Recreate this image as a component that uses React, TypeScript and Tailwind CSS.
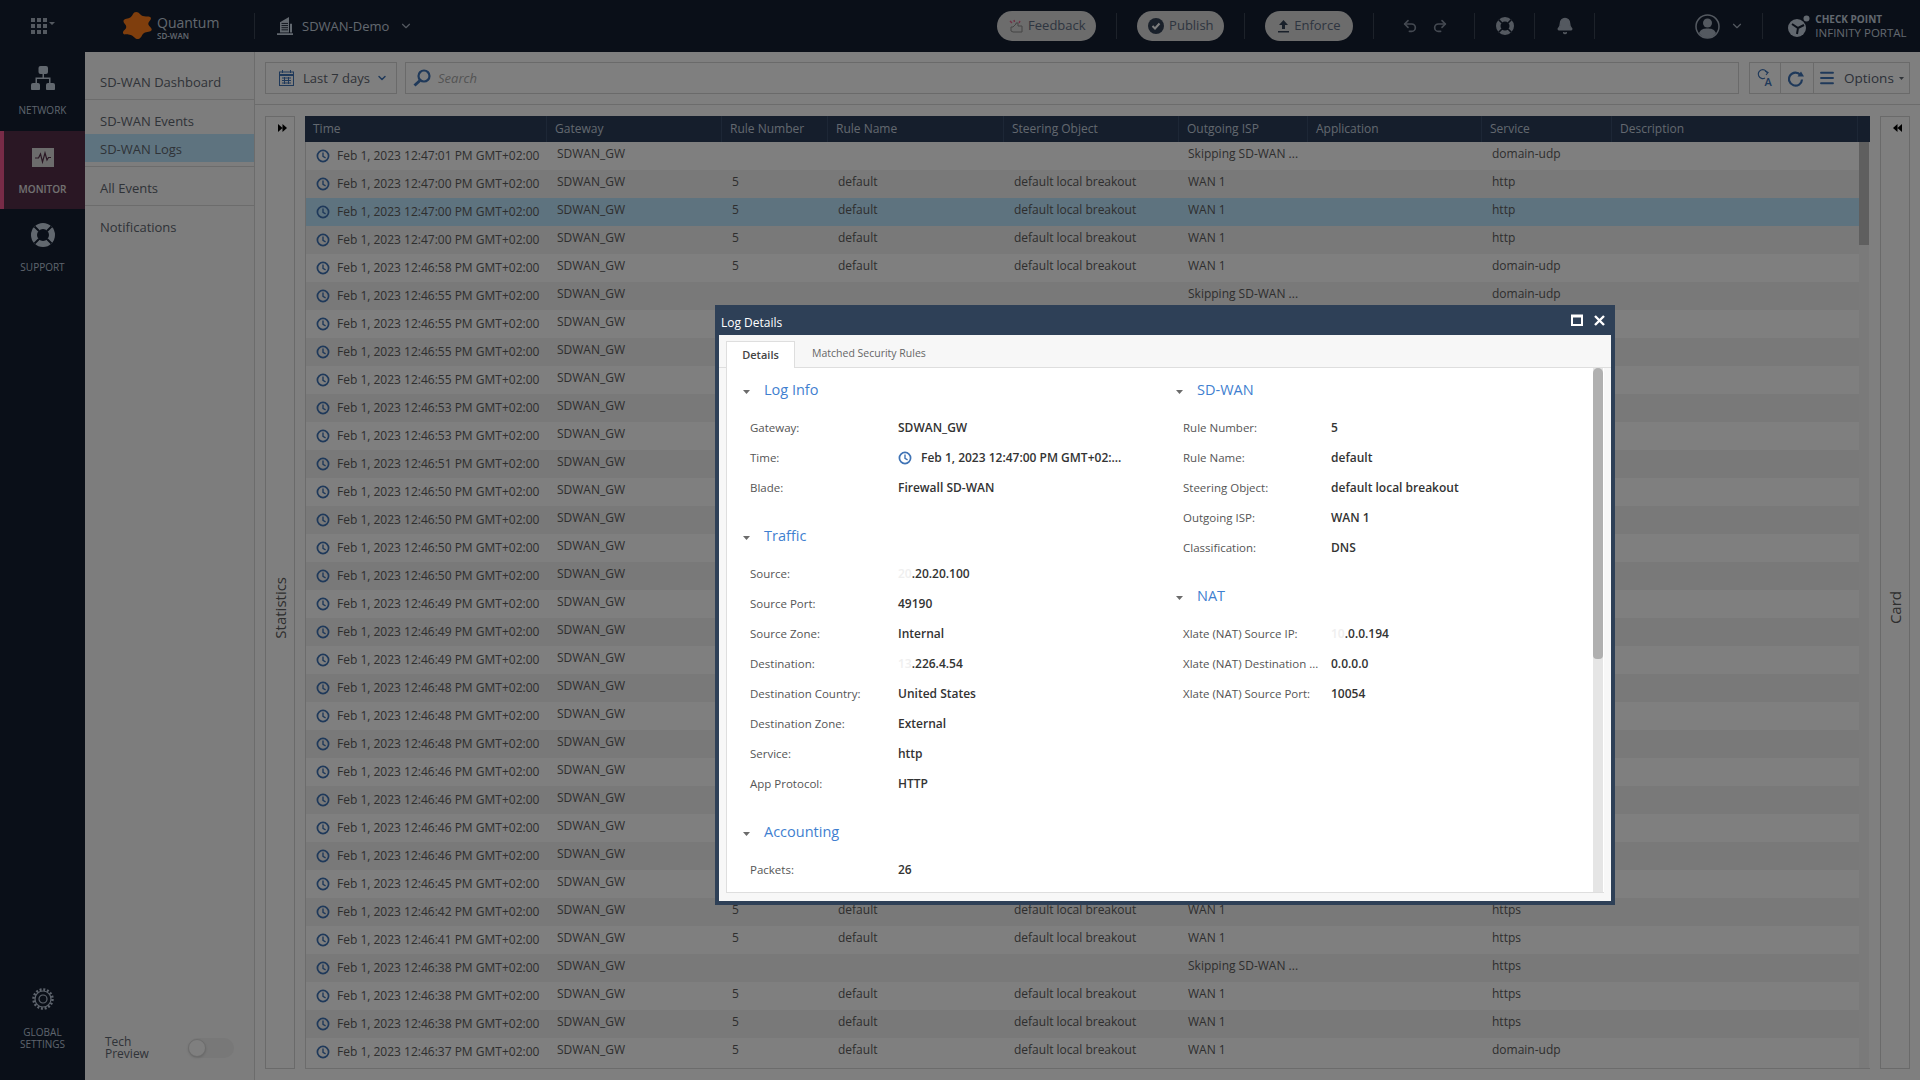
import { Bell, ChevronDown, Menu, Redo2, Undo2 } from "lucide-react";

const font = { fontFamily: '"Open Sans", "Noto Sans", sans-serif' };

const columns = [
  { name: "Time", width: "w-[242px]" },
  { name: "Gateway", width: "w-[175px]" },
  { name: "Rule Number", width: "w-[106px]" },
  { name: "Rule Name", width: "w-[176px]" },
  { name: "Steering Object", width: "w-[175px]" },
  { name: "Outgoing ISP", width: "w-[129px]" },
  { name: "Application", width: "w-[174px]" },
  { name: "Service", width: "w-[130px]" },
  { name: "Description", width: "w-[246px]" },
];

// skip = row went around SD-WAN, so no rule columns
// covered = row sits behind the Log Details dialog, only the left columns show
const logs = [
  { time: "12:47:01", service: "domain-udp", skip: true },
  { time: "12:47:00", service: "http" },
  { time: "12:47:00", service: "http", selected: true },
  { time: "12:47:00", service: "http" },
  { time: "12:46:58", service: "domain-udp" },
  { time: "12:46:55", service: "domain-udp", skip: true },
  { time: "12:46:55", covered: true },
  { time: "12:46:55", covered: true },
  { time: "12:46:55", covered: true },
  { time: "12:46:53", covered: true },
  { time: "12:46:53", covered: true },
  { time: "12:46:51", covered: true },
  { time: "12:46:50", covered: true },
  { time: "12:46:50", covered: true },
  { time: "12:46:50", covered: true },
  { time: "12:46:50", covered: true },
  { time: "12:46:49", covered: true },
  { time: "12:46:49", covered: true },
  { time: "12:46:49", covered: true },
  { time: "12:46:48", covered: true },
  { time: "12:46:48", covered: true },
  { time: "12:46:48", covered: true },
  { time: "12:46:46", covered: true },
  { time: "12:46:46", covered: true },
  { time: "12:46:46", covered: true },
  { time: "12:46:46", covered: true },
  { time: "12:46:45", covered: true },
  { time: "12:46:42", service: "https" },
  { time: "12:46:41", service: "https" },
  { time: "12:46:38", service: "https", skip: true },
  { time: "12:46:38", service: "https" },
  { time: "12:46:38", service: "https" },
  { time: "12:46:37", service: "domain-udp" },
];

type Log = { time: string; service?: string; skip?: boolean; selected?: boolean; covered?: boolean };

function ClockIcon({ className }: { className: string }) {
  return (
    <svg className={className} viewBox="0 0 14 14" fill="none" stroke="#3f73b5" strokeWidth="1.7">
      <circle cx="7" cy="7" r="5.6" />
      <path d="M7 3.6V7.4L9.6 8.8" strokeWidth="1.4" />
    </svg>
  );
}

function LifeBuoy({ size, color, hole }: { size: number; color: string; hole: string }) {
  return (
    <svg width={size} height={size} viewBox="0 0 24 24">
      <circle cx="12" cy="12" r="12" fill={color} />
      <circle cx="12" cy="12" r="6" fill={hole} />
      <path d="M3.5 3.5L8 8M20.5 3.5L16 8M3.5 20.5L8 16M20.5 20.5L16 16" stroke={hole} strokeWidth="2" />
    </svg>
  );
}

function DoubleArrow({ left }: { left?: boolean }) {
  return (
    <svg width="9" height="8" viewBox="0 0 9 8" fill="#000" className={left ? "rotate-180" : ""}>
      <path d="M0 0L4.5 4L0 8ZM4.5 0L9 4L4.5 8Z" />
    </svg>
  );
}

function Caret() {
  return (
    <svg width="7" height="4" viewBox="0 0 7 4" fill="#6b6b6b" className="mt-[4px]">
      <path d="M0 0H7L3.5 4Z" />
    </svg>
  );
}

function HeaderDivider({ className }: { className: string }) {
  return <div className={`h-[26px] w-px shrink-0 bg-[#3a4454] ${className}`} />;
}

function PillButton({ width, margin, icon, label }: { width: string; margin: string; icon: React.ReactNode; label: string }) {
  return (
    <button className={`flex h-[30px] shrink-0 items-center justify-center gap-[5px] rounded-full bg-[#d8d8d8] text-[13px] text-[#5c6a80] ${width} ${margin}`}>
      {icon}
      {label}
    </button>
  );
}

function Header() {
  return (
    <header className="flex h-[52px] shrink-0 items-center bg-[#141e30]">
      <svg className="ml-[31px] shrink-0" width="24" height="16" viewBox="0 0 24 16" fill="#a8b2c0">
        <path d="M0 0h4v4H0zM6 0h4v4H6zM12 0h4v4h-4zM0 6h4v4H0zM6 6h4v4H6zM12 6h4v4h-4zM0 12h4v4H0zM6 12h4v4H6zM12 12h4v4h-4zM18 4h6l-3 3z" />
      </svg>
      <svg className="ml-[68px] shrink-0" width="29" height="29" viewBox="0 0 22 29" preserveAspectRatio="none" fill="#ff7d1a">
        <path d="M10 0c2.500 0 2.800 3 5 4 2.500 1 5-.5 6 1.500 1 2.500-2 4-1.800 6.500.2 2.500 3 3.500 2.500 6-.6 2.300-3.800 1.500-5.700 3-2 1.500-1.800 5.500-4.500 6-2.500.4-3.200-3-5.500-4-2.300-1-5.600.4-6-2-.4-2.500 2.500-3.500 2.500-6S0 11.500.4 8.800C.8 6.300 4 7 5.800 5.300 7.500 3.700 7.500 0 10 0z" />
      </svg>
      <div className="ml-[5px] w-[97px] shrink-0 pt-[2px] text-[#c5d0de]">
        <div className="text-[14px] leading-[17px]">Quantum</div>
        <div className="text-[8px] font-semibold leading-[10px]">SD-WAN</div>
      </div>
      <HeaderDivider className="" />
      <svg className="ml-[22px] shrink-0" width="16" height="18" viewBox="0 0 16 21" preserveAspectRatio="none" fill="#c5d0de">
        <path d="M3 6L12 0V18H3ZM13 8H15V18H13ZM0 19H16V21H0Z" />
        <path d="M4.500 7.500H11M4.500 10H11M4.500 12.500H11M4.500 15H11" stroke="#141e30" strokeWidth="1" />
      </svg>
      <span className="ml-[9px] shrink-0 pt-[2px] text-[13px] text-[#c5d0de]">SDWAN-Demo</span>
      <ChevronDown className="ml-[10px] shrink-0 text-[#a8b2c0]" size={14} />

      <PillButton
        width="w-[99px]"
        margin="ml-[584px]"
        label="Feedback"
        icon={
          <svg width="15" height="15" viewBox="0 0 15 15" fill="none" stroke="#8a8a8a" strokeWidth="1">
            <path d="M3 8H5L8 5V4H10V7H14V13H5L3 12Z" />
            <path d="M2 2L4 4M6 1L6.500 3M12 2L11 4" stroke="#e0608a" strokeWidth="1.400" />
          </svg>
        }
      />
      <HeaderDivider className="ml-[20px]" />
      <PillButton
        width="w-[87px]"
        margin="ml-[20px]"
        label="Publish"
        icon={
          <svg width="16" height="16" viewBox="0 0 16 16">
            <circle cx="8" cy="8" r="8" fill="#334155" />
            <path d="M4.500 8L7 10.500L11.500 5.500" fill="none" stroke="#fff" strokeWidth="2" />
          </svg>
        }
      />
      <HeaderDivider className="ml-[20px]" />
      <PillButton
        width="w-[88px]"
        margin="ml-[20px]"
        label="Enforce"
        icon={
          <svg width="11" height="13" viewBox="0 0 11 13" fill="#334155">
            <path d="M5.500 0L10 5H7V9H4V5H1ZM0 11H11V12.500H0Z" />
          </svg>
        }
      />
      <HeaderDivider className="ml-[20px]" />
      <Undo2 className="ml-[28px] shrink-0 text-[#8993a3]" size={16} strokeWidth={2.500} />
      <Redo2 className="ml-[14px] shrink-0 text-[#8993a3]" size={16} strokeWidth={2.500} />
      <HeaderDivider className="ml-[26px]" />
      <div className="ml-[21px] shrink-0">
        <LifeBuoy size={18} color="#a8b2c0" hole="#141e30" />
      </div>
      <HeaderDivider className="ml-[20px]" />
      <Bell className="ml-[21px] shrink-0 fill-[#a8b2c0] text-[#a8b2c0]" size={18} />
      <HeaderDivider className="ml-[20px]" />
      <svg className="ml-[100px] shrink-0" width="25" height="25" viewBox="0 0 25 25" fill="#a8b2c0">
        <circle cx="12.500" cy="12.500" r="11.500" fill="none" stroke="#a8b2c0" strokeWidth="1.500" />
        <circle cx="12.500" cy="9" r="4.500" />
        <path d="M4 19C6 15 9 14.500 12.500 14.500S19 15 21 19C19 22.500 15.500 24 12.500 24S6 22.500 4 19Z" />
      </svg>
      <ChevronDown className="ml-[10px] shrink-0 text-[#a8b2c0]" size={14} />
      <HeaderDivider className="ml-[18px]" />
      <svg className="ml-[25px] shrink-0" width="22" height="22" viewBox="0 0 22 22">
        <circle cx="9" cy="13" r="9" fill="#c5d0de" />
        <circle cx="18.500" cy="3.500" r="3" fill="#c5d0de" />
        <path d="M4 9L10 13L16 10M10 13L9 19" fill="none" stroke="#141e30" strokeWidth="2" />
      </svg>
      <div className="ml-[5px] shrink-0 text-[#c5d0de]">
        <div className="text-[10px] font-bold leading-[13px]">CHECK POINT</div>
        <div className="text-[11.500px] leading-[14px]">INFINITY PORTAL</div>
      </div>
    </header>
  );
}

function Sidebar() {
  return (
    <aside className="flex w-[85px] shrink-0 flex-col bg-[#141e30] text-center text-[10px] text-[#bcc8da]">
      <div className="flex h-[79px] flex-col items-center pt-[14px]">
        <svg width="24" height="24" viewBox="0 0 24 24" fill="#c5d0de">
          <rect x="7.500" width="9.500" height="8" rx="2" />
          <rect y="17" width="9" height="7.500" rx="2" />
          <rect x="15" y="17" width="9" height="7.500" rx="2" />
          <path d="M11.500 8h1.500v3.500h6.500V17H18v-4H6v4H4.500v-5.500h7Z" />
        </svg>
        <span className="mt-[13px] leading-[14px]">NETWORK</span>
      </div>
      <div className="flex h-[78px] flex-col items-center border-l-4 border-[#f0568f] bg-[#542e48] pr-[4px] pt-[17px] font-semibold text-[#e4e4e4]">
        <svg width="22" height="19" viewBox="0 0 22 19">
          <rect width="22" height="19" fill="#d8d8d8" />
          <path d="M3 10H6.500L8.500 6L10.500 14L13 5L15 12L16.500 9.500H19" fill="none" stroke="#542e48" strokeWidth="1.200" />
        </svg>
        <span className="mt-[15px] leading-[14px]">MONITOR</span>
      </div>
      <div className="flex h-[79px] flex-col items-center pt-[14px]">
        <LifeBuoy size={24} color="#c5d0de" hole="#141e30" />
        <span className="mt-[13px] leading-[14px]">SUPPORT</span>
      </div>
      <div className="mt-auto flex flex-col items-center pb-[30px]">
        <svg width="22" height="22" viewBox="0 0 22 22" fill="none" stroke="#bcc8da">
          <circle cx="11" cy="11" r="9.500" strokeWidth="2.500" strokeDasharray="2 1.730" />
          <circle cx="11" cy="11" r="8" strokeWidth="1.200" />
          <circle cx="11" cy="11" r="4" strokeWidth="1.200" />
        </svg>
        <span className="mt-[16px] leading-[12px]">
          GLOBAL
          <br />
          SETTINGS
        </span>
      </div>
    </aside>
  );
}

function NavSection() {
  return (
    <nav className="flex w-[170px] shrink-0 flex-col border-r border-[#d8d8d8] bg-[#fafafa] text-[13px] text-[#5f6670]">
      <div className="flex h-[48px] items-center border-b border-[#d8d8d8] pl-[15px] pt-[15px]">SD-WAN Dashboard</div>
      <div className="flex h-[67px] flex-col border-b border-[#d8d8d8] pt-[6px]">
        <div className="flex h-[28px] items-center pl-[15px] pt-[3px]">SD-WAN Events</div>
        <div className="flex h-[28px] items-center bg-[#bce6ff] pl-[15px] pt-[3px]">SD-WAN Logs</div>
      </div>
      <div className="flex h-[39px] items-center border-b border-[#d8d8d8] pl-[15px] pt-[5px]">All Events</div>
      <div className="flex h-[42px] items-center pl-[15px] pt-[1px]">Notifications</div>
      <div className="mt-auto flex items-center pb-[20px] pl-[20px]">
        <span className="w-[83px] text-[12px] leading-[12px]">
          Tech
          <br />
          Preview
        </span>
        <div className="flex h-[20px] w-[46px] items-center rounded-full bg-[#f0f0f0]">
          <div className="h-[18px] w-[18px] rounded-full border border-[#d8d8d8] bg-white shadow" />
        </div>
      </div>
    </nav>
  );
}

function Toolbar() {
  return (
    <div className="flex h-[53px] shrink-0 items-center border-b border-[#d8d8d8] px-[10px] text-[13px] text-[#5f6670]">
      <div className="flex h-[32px] w-[132px] shrink-0 items-center border border-[#d4d4d4] pl-[13px]">
        <svg width="15" height="16" viewBox="0 0 15 16" fill="none" stroke="#3f73b5">
          <rect x="0.500" y="2" width="14" height="13.500" />
          <path d="M0 5H15" strokeWidth="2" />
          <path d="M3.500 0V3M11.500 0V3M3 8H12M3 10.500H12M3 13H12M5.500 7V14M9.500 7V14" />
        </svg>
        <span className="ml-[9px] pt-[1px]">Last 7 days</span>
        <ChevronDown className="ml-[6px] text-[#3f73b5]" size={12} strokeWidth={3} />
      </div>
      <div className="ml-[8px] flex h-[32px] flex-1 items-center border border-[#d4d4d4] pl-[7px]">
        <svg width="18" height="18" viewBox="0 0 18 18" fill="none" stroke="#3f73b5">
          <circle cx="11" cy="7" r="5.500" strokeWidth="2.200" />
          <path d="M7 11.500L1.500 16.500" strokeWidth="3" />
        </svg>
        <span className="ml-[7px] pt-[1px] italic text-[#a8a8a8]">Search</span>
      </div>
      <div className="ml-[10px] flex h-[32px] w-[161px] shrink-0 items-center border border-[#d4d4d4]">
        <div className="flex h-full w-[31px] items-center justify-center border-r border-[#d4d4d4]">
          <div className="relative h-[20px] w-[17px]">
            <svg width="12" height="12" viewBox="0 0 12 12" fill="none" stroke="#3f73b5" strokeWidth="1.200">
              <path d="M10 4.500A4.500 4.500 0 1 0 8 10" />
              <path d="M8 3L11 4.500L9 7" />
            </svg>
            <span className="absolute left-[8px] top-[7px] text-[11px] font-semibold leading-[13px] text-[#3f73b5]">A</span>
          </div>
        </div>
        <div className="flex h-full w-[33px] items-center justify-center border-r border-[#d4d4d4] pr-[2px]">
          <svg width="16" height="17" viewBox="0 0 16 17" fill="none" stroke="#3f73b5" strokeWidth="2.200">
            <path d="M12.500 5A6.500 6.500 0 1 0 14 9.500" />
            <path d="M9.500 6.500H16L13 1.500Z" fill="#3f73b5" stroke="none" />
          </svg>
        </div>
        <Menu className="ml-[4px] text-[#3f73b5]" size={18} strokeWidth={2.500} />
        <span className="ml-[8px] pt-[1px] text-[13.500px] text-[#566070]">Options</span>
        <svg className="ml-[5px] shrink-0" width="5" height="3" viewBox="0 0 5 3" fill="#5f6670">
          <path d="M0 0H5L2.500 3Z" />
        </svg>
      </div>
    </div>
  );
}

function LogRow({ log, even }: { log: Log; even: boolean }) {
  const bg = log.selected ? "bg-[#bce6ff]" : even ? "bg-[#f2f2f2]" : "bg-white";
  return (
    <div className={`flex h-[28px] shrink-0 items-center text-[12px] text-[#5c5c5c] ${bg}`}>
      <div className="flex w-[242px] items-center pl-[10px]">
        <ClockIcon className="h-[14px] w-[14px] shrink-0" />
        <span className="ml-[7px] whitespace-nowrap">Feb 1, 2023 {log.time} PM GMT+02:00</span>
      </div>
      <div className="w-[175px] pb-[4px] pl-[9px]">SDWAN_GW</div>
      {!log.covered && (
        <>
          <div className="w-[106px] pb-[4px] pl-[9px]">{log.skip ? "" : "5"}</div>
          <div className="w-[176px] pb-[4px] pl-[9px]">{log.skip ? "" : "default"}</div>
          <div className="w-[175px] pb-[4px] pl-[9px]">{log.skip ? "" : "default local breakout"}</div>
          <div className="w-[129px] pb-[4px] pl-[8px]">{log.skip ? "Skipping SD-WAN ..." : "WAN 1"}</div>
          <div className="w-[174px]" />
          <div className="w-[130px] pb-[4px] pl-[9px]">{log.service}</div>
        </>
      )}
    </div>
  );
}

function LogTable() {
  return (
    <div className="flex flex-1 flex-col overflow-hidden">
      <div className="flex h-[26px] shrink-0 bg-[#2a3c58] text-[12px] text-[#c5d0de]">
        {columns.map((col) => (
          <div key={col.name} className={`flex items-center border-r border-[#3a4f6c] pl-[8px] ${col.width}`}>
            {col.name}
          </div>
        ))}
      </div>
      <div className="relative flex flex-1 flex-col border-b border-l border-[#d8d8d8] pr-[11px]">
        {logs.map((log, i) => (
          <LogRow key={i} log={log} even={i % 2 === 1} />
        ))}
        <div className="absolute bottom-0 right-[1px] top-0 w-[10px] bg-[#f5f5f5]">
          <div className="h-[103px] bg-[#bebebe]" />
        </div>
      </div>
    </div>
  );
}

function SidePanel({ label, left }: { label: string; left?: boolean }) {
  return (
    <div className="relative flex w-[30px] shrink-0 items-center justify-center border border-[#d4d4d4] pt-[30px]">
      <div className="absolute left-[12px] top-[7px]">
        <DoubleArrow left={left} />
      </div>
      <span className="rotate-180 text-[15px] text-[#5c5c5c] [writing-mode:vertical-rl]">{label}</span>
    </div>
  );
}

function Field({ label, children }: { label: string; children: React.ReactNode }) {
  return (
    <div className="flex h-[30px] items-center pl-[23px] text-[12px]">
      <span className="w-[148px] shrink-0 whitespace-nowrap text-[11.500px] text-[#555]">{label}</span>
      <span className="flex items-center whitespace-nowrap font-semibold text-[#333]">{children}</span>
    </div>
  );
}

function Section({ title, fields, className }: { title: string; fields: [string, React.ReactNode][]; className?: string }) {
  return (
    <section className={className}>
      <div className="mb-[8px] flex h-[30px] items-center pl-[16px]">
        <Caret />
        <h3 className="ml-[14px] pb-[1px] text-[14.500px] text-[#3f7fd0]">{title}</h3>
      </div>
      {fields.map(([label, value]) => (
        <Field key={label} label={label}>
          {value}
        </Field>
      ))}
    </section>
  );
}

function Masked({ digits, rest }: { digits: string; rest: string }) {
  return (
    <>
      <span className="text-[#efefef]">{digits}</span>
      {rest}
    </>
  );
}

function LogDetails() {
  return (
    <div className="absolute left-[715px] top-[305px] flex h-[600px] w-[900px] flex-col border-x-4 border-b-4 border-[#2e4057] bg-[#f7f7f7]" style={font}>
      <div className="flex h-[30px] shrink-0 items-center bg-[#2e4057] text-[12px] text-white">
        <span className="ml-[2px] pt-[5px]">Log Details</span>
        <svg className="ml-auto" width="12" height="12" viewBox="0 0 12 12" fill="none" stroke="#fff">
          <rect x="1" y="1.500" width="10" height="9.500" strokeWidth="2" />
          <path d="M0 2.500H12" strokeWidth="2" />
        </svg>
        <svg className="ml-[11px] mr-[6px]" width="11" height="11" viewBox="0 0 11 11" stroke="#fff" strokeWidth="2.400">
          <path d="M1 1L10 10M10 1L1 10" />
        </svg>
      </div>
      <div className="flex h-[33px] shrink-0 items-end border-b border-[#dedede] pl-[7px] text-[11px]">
        <div className="-mb-px flex h-[27px] w-[69px] items-center justify-center border-x border-t border-[#dedede] bg-white font-semibold text-[#444]">
          Details
        </div>
        <div className="ml-[17px] flex h-[26px] items-center text-[10.500px] text-[#666]">Matched Security Rules</div>
      </div>
      <div className="relative mx-[7px] mb-[8px] flex flex-1 overflow-hidden border-b border-l border-[#dedede] bg-white pt-[7px]">
        <div className="w-[433px] shrink-0">
          <Section
            title="Log Info"
            fields={[
              ["Gateway:", "SDWAN_GW"],
              [
                "Time:",
                <>
                  <ClockIcon className="mr-[9px] h-[14px] w-[14px]" />
                  Feb 1, 2023 12:47:00 PM GMT+02:...
                </>,
              ],
              ["Blade:", "Firewall SD-WAN"],
            ]}
          />
          <Section
            className="mt-[18px]"
            title="Traffic"
            fields={[
              ["Source:", <Masked digits="20" rest=".20.20.100" />],
              ["Source Port:", "49190"],
              ["Source Zone:", "Internal"],
              ["Destination:", <Masked digits="13" rest=".226.4.54" />],
              ["Destination Country:", "United States"],
              ["Destination Zone:", "External"],
              ["Service:", "http"],
              ["App Protocol:", "HTTP"],
            ]}
          />
          <Section className="mt-[18px]" title="Accounting" fields={[["Packets:", "26"]]} />
        </div>
        <div className="flex-1">
          <Section
            title="SD-WAN"
            fields={[
              ["Rule Number:", "5"],
              ["Rule Name:", "default"],
              ["Steering Object:", "default local breakout"],
              ["Outgoing ISP:", "WAN 1"],
              ["Classification:", "DNS"],
            ]}
          />
          <Section
            className="mt-[18px]"
            title="NAT"
            fields={[
              ["Xlate (NAT) Source IP:", <Masked digits="10" rest=".0.0.194" />],
              ["Xlate (NAT) Destination ...", "0.0.0.0"],
              ["Xlate (NAT) Source Port:", "10054"],
            ]}
          />
        </div>
        <div className="absolute bottom-0 right-[1px] top-0 w-[10px] bg-[#e5e5e5]">
          <div className="h-[291px] rounded-t-[5px] rounded-b-[4px] bg-[#b0b0b0]" />
        </div>
      </div>
    </div>
  );
}

export default function App() {
  return (
    <div className="relative flex h-[1080px] w-[1920px] flex-col overflow-hidden bg-white" style={font}>
      <Header />
      <div className="flex min-h-0 flex-1">
        <Sidebar />
        <NavSection />
        <main className="flex min-w-0 flex-1 flex-col">
          <Toolbar />
          <div className="flex flex-1 gap-[10px] px-[10px] pb-[11px] pt-[11px]">
            <SidePanel label="Statistics" />
            <LogTable />
            <SidePanel label="Card" left />
          </div>
        </main>
      </div>
      {/* modal backdrop */}
      <div className="absolute inset-0 bg-black/50" />
      <LogDetails />
    </div>
  );
}
